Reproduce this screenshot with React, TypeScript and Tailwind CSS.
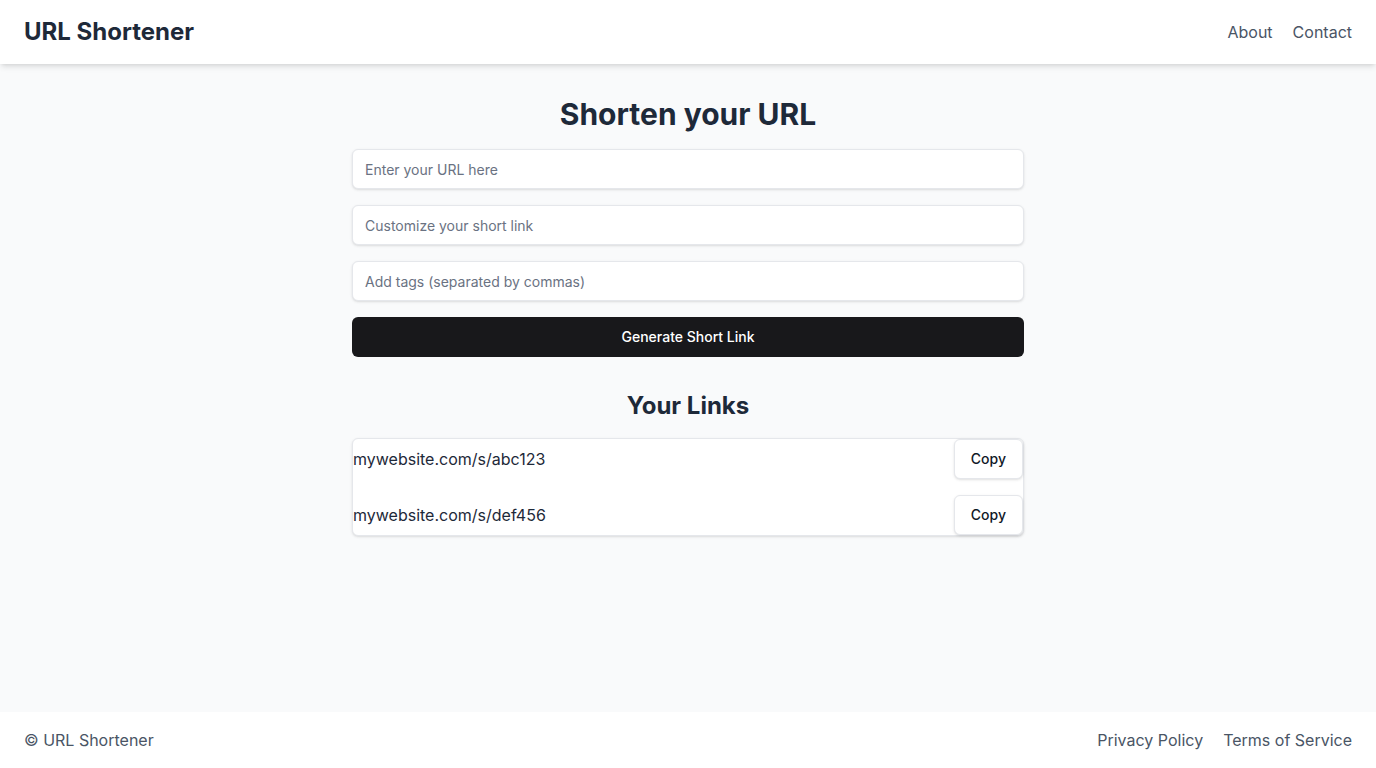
import React from "react";

const links = ["mywebsite.com/s/abc123", "mywebsite.com/s/def456"];

export default function App() {
  return (
    <div className="flex min-h-screen flex-col bg-gray-50 font-['Inter',sans-serif] text-gray-800">
      <header className="relative z-10 flex h-16 items-center justify-between bg-white px-6 shadow-md">
        <h1 className="text-2xl font-bold text-gray-800">URL Shortener</h1>
        <nav className="flex gap-5 text-base text-gray-600">
          <a href="#">About</a>
          <a href="#">Contact</a>
        </nav>
      </header>

      <main className="flex-1 px-6 py-8">
        <div className="mx-auto max-w-2xl">
          <h2 className="mb-[17px] text-center text-3xl font-bold text-gray-800">Shorten your URL</h2>
          <div className="flex flex-col gap-4">
            <input
              className="h-10 w-full rounded-md border border-gray-200 bg-white px-3 text-sm shadow-sm placeholder:text-gray-500"
              placeholder="Enter your URL here"
            />
            <input
              className="h-10 w-full rounded-md border border-gray-200 bg-white px-3 text-sm shadow-sm placeholder:text-gray-500"
              placeholder="Customize your short link"
            />
            <input
              className="h-10 w-full rounded-md border border-gray-200 bg-white px-3 text-sm shadow-sm placeholder:text-gray-500"
              placeholder="Add tags (separated by commas)"
            />
            <button className="h-10 w-full rounded-md bg-[#18181b] text-sm font-medium text-white">
              Generate Short Link
            </button>
          </div>

          <h2 className="mb-4 mt-[33px] text-center text-2xl font-bold text-gray-800">Your Links</h2>
          <ul className="flex flex-col gap-4 rounded-md border border-gray-200 bg-white shadow-sm">
            {links.map((l) => (
              <li key={l} className="flex items-center justify-between">
                <span className="text-base text-gray-800">{l}</span>
                <button className="h-10 rounded-md border border-gray-200 bg-white px-4 text-sm font-medium text-gray-900 shadow-sm">
                  Copy
                </button>
              </li>
            ))}
          </ul>
        </div>
      </main>

      <footer className="flex h-14 items-center justify-between bg-white px-6 text-base text-gray-600">
        <p>© URL Shortener</p>
        <nav className="flex gap-5">
          <a href="#">Privacy Policy</a>
          <a href="#">Terms of Service</a>
        </nav>
      </footer>
    </div>
  );
}
